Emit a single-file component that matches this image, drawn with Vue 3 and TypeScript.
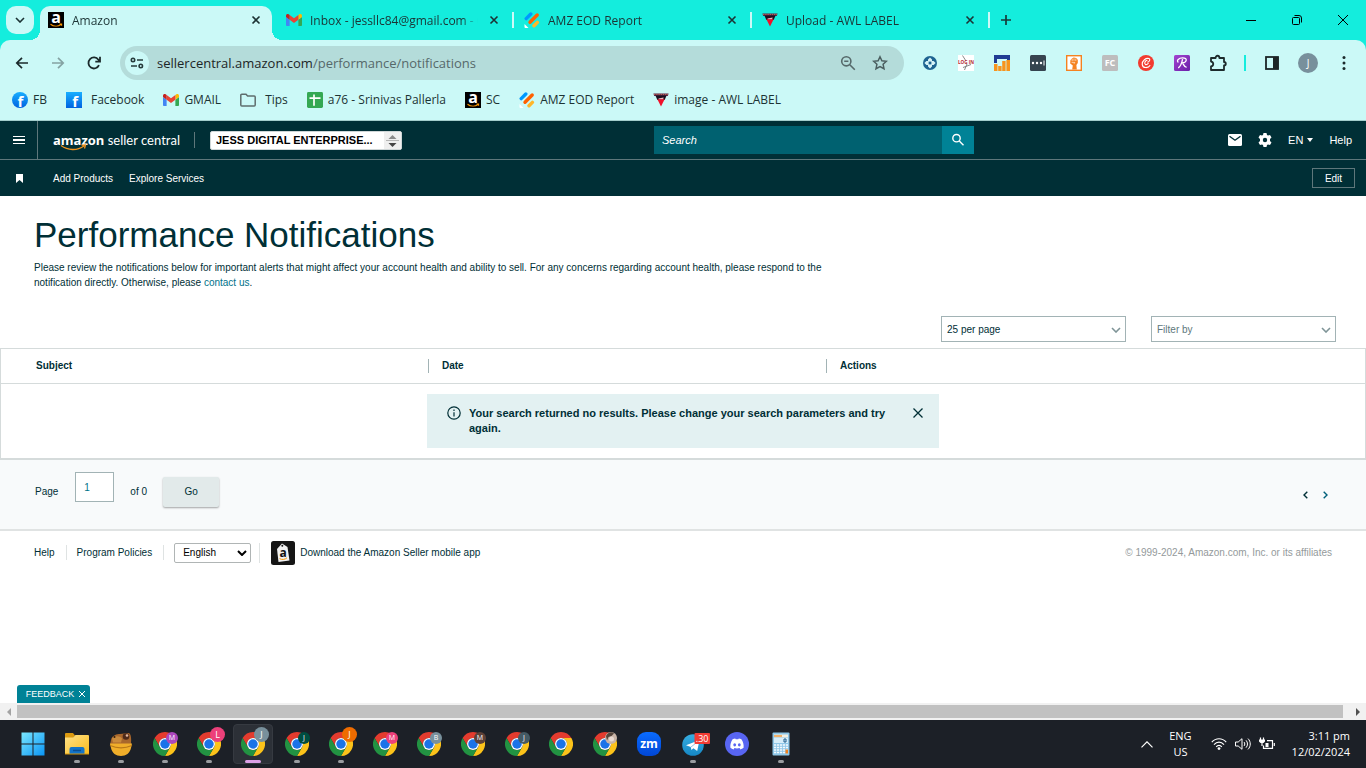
<script setup lang="ts">
import { h, ref } from 'vue'

interface Tab { title: string; icon: string; active?: boolean }
interface Bookmark { label: string; icon: string; wide?: boolean }
interface TaskItem { name: string; icon: string; badge?: string; color?: string; small?: boolean; running?: boolean; active?: boolean }
interface Glyph { text: string; x: number; y: number; size: number; fill?: string; weight?: number }

const tabs: Tab[] = [
  { title: 'Amazon', icon: 'amazon', active: true },
  { title: 'Inbox - jessllc84@gmail.com - Gmail', icon: 'gmail' },
  { title: 'AMZ EOD Report', icon: 'jot' },
  { title: 'Upload - AWL LABEL', icon: 'awl' },
]

const bookmarks: Bookmark[] = [
  { label: 'FB', icon: 'fb' },
  { label: 'Facebook', icon: 'fbsq', wide: true },
  { label: 'GMAIL', icon: 'gmail' },
  { label: 'Tips', icon: 'folder', wide: true },
  { label: 'a76 - Srinivas Pallerla', icon: 'sheet' },
  { label: 'SC', icon: 'amazon' },
  { label: 'AMZ EOD Report', icon: 'jot' },
  { label: 'image - AWL LABEL', icon: 'awl' },
]

const extensions: string[] = ['ext-plus', 'ext-login', 'ext-chart', 'ext-dots', 'ext-fist', 'ext-fc', 'ext-c', 'ext-r', 'puzzle']

const tasks: TaskItem[] = [
  { name: 'Start', icon: 'windows' },
  { name: 'File Explorer', icon: 'explorer', running: true },
  { name: 'Capybara', icon: 'capy', running: true },
  { name: 'Chrome M', icon: 'chrome', badge: 'M', color: '#ab47bc', small: true, running: true },
  { name: 'Chrome L', icon: 'chrome', badge: 'L', color: '#ec407a', running: true },
  { name: 'Chrome J', icon: 'chrome', badge: 'J', color: '#78909c', active: true },
  { name: 'Chrome J green', icon: 'chrome', badge: 'J', color: '#004d40', small: true, running: true },
  { name: 'Chrome J orange', icon: 'chrome', badge: 'J', color: '#ef6c00', running: true },
  { name: 'Chrome M pink', icon: 'chrome', badge: 'M', color: '#ec407a', small: true },
  { name: 'Chrome B', icon: 'chrome', badge: 'B', color: '#78909c', small: true },
  { name: 'Chrome M brown', icon: 'chrome', badge: 'M', color: '#5d4037', small: true },
  { name: 'Chrome J slate', icon: 'chrome', badge: 'J', color: '#455a64', small: true },
  { name: 'Chrome', icon: 'chrome' },
  { name: 'Chrome photo', icon: 'chromephoto' },
  { name: 'Zoom', icon: 'zoom' },
  { name: 'Telegram', icon: 'telegram', running: true },
  { name: 'Discord', icon: 'discord' },
  { name: 'Calculator', icon: 'calc', running: true },
]

const boxes: Record<string, string> = { zoom: '0 0 24 24', telegram: '0 0 28 24' }

const glyphs: Record<string, Glyph> = {
  amazon: { text: 'a', x: 8, y: 10.6, size: 16 },
  fb: { text: 'f', x: 8.4, y: 14.6, size: 15 },
  fbsq: { text: 'f', x: 9.2, y: 15, size: 15 },
  'ext-login': { text: 'LOG IN', x: 8, y: 8.8, size: 4.6, fill: '#b3282d' },
  'ext-fc': { text: 'FC', x: 8, y: 11.4, size: 9 },
  zoom: { text: 'zm', x: 12, y: 16, size: 12 },
  telegram: { text: '.30', x: 20.2, y: 10, size: 9, weight: 400 },
}

const Icon = (props: { name: string }) => {
  const g = glyphs[props.name]
  return h('svg', { viewBox: boxes[props.name] ?? '0 0 16 16', 'aria-hidden': 'true' }, [
    h('use', { href: '#' + props.name, width: '100%', height: '100%' }),
    g && h('text', {
      x: g.x, y: g.y, 'text-anchor': 'middle', 'font-family': 'Open Sans, sans-serif',
      'font-weight': g.weight ?? 700, 'font-size': g.size, fill: g.fill ?? '#fff',
    }, g.text),
  ])
}
Icon.props = ['name']

const page = ref('1')
</script>

<template>
  <div class="screen">
    <svg class="defs" aria-hidden="true">
      <defs>
        <linearGradient id="gFb" x1="0" y1="0" x2="0" y2="1"><stop offset="0" stop-color="#19afff" /><stop offset="1" stop-color="#0062e0" /></linearGradient>
        <linearGradient id="gWin" x1="0" y1="0" x2="1" y2="1"><stop offset="0" stop-color="#7be8ff" /><stop offset="1" stop-color="#0a95f5" /></linearGradient>
        <linearGradient id="gFold" x1="0" y1="0" x2="1" y2="1"><stop offset="0" stop-color="#ffe28a" /><stop offset="1" stop-color="#fbbc1c" /></linearGradient>
        <linearGradient id="gZoom" x1="0" y1="0" x2="0" y2="1"><stop offset="0" stop-color="#0a6cff" /><stop offset="1" stop-color="#0046d5" /></linearGradient>
        <linearGradient id="gTel" x1="0" y1="0" x2="0" y2="1"><stop offset="0" stop-color="#37aee2" /><stop offset="1" stop-color="#1587c4" /></linearGradient>
        <linearGradient id="gPur" x1="0" y1="0" x2="1" y2="1"><stop offset="0" stop-color="#a244d0" /><stop offset="1" stop-color="#6a1fa8" /></linearGradient>
      </defs>
      <symbol id="amazon" viewBox="0 0 16 16">
        <rect width="16" height="16" fill="#000" />
        <path d="M2.5 12.2c3.2 2.4 7.6 2.4 10.6.3M11.6 12h2v1.8" fill="none" stroke="#f90" stroke-width="1.1" />
      </symbol>
      <symbol id="gmail" viewBox="52 31 88 88">
        <path fill="#4285f4" d="M58 108h14V74L52 59v43c0 3.32 2.69 6 6 6" />
        <path fill="#34a853" d="M120 108h14c3.32 0 6-2.69 6-6V59l-20 15" />
        <path fill="#fbbc04" d="M120 48v26l20-15v-8c0-7.42-8.47-11.65-14.4-7.2" />
        <path fill="#ea4335" d="M72 74V48l24 18 24-18v26L96 92" />
        <path fill="#c5221f" d="M52 51v8l20 15V48l-5.6-4.2c-5.94-4.45-14.4-.22-14.4 7.2" />
      </symbol>
      <symbol id="jot" viewBox="0 0 16 16">
        <g fill="none" stroke-linecap="round" stroke-width="3.4">
          <path d="M2.200 6.600 6.800 2" stroke="#0099ff" />
          <path d="M6 10.200 13.200 3" stroke="#ff6100" />
          <path d="M10 13.800 13.400 10.400" stroke="#ffb629" />
        </g>
        <path d="M.5 12v3a1 1 0 0 0 1 1h3z" fill="#fff" />
      </symbol>
      <symbol id="awl" viewBox="0 0 16 16">
        <path d="M.4 1.600h15.200l-.8 2.400H1.200z" fill="#5b2348" />
        <path d="M2.400 3.600h11.200L11.600 8H4.400z" fill="#1b1020" />
        <path d="M1 2.400h14" stroke="#e58a5b" stroke-width=".7" stroke-dasharray="1.4 .8" />
        <path d="M4.400 7.200h7.200L8 14.400z" fill="#f0102a" />
        <path d="M5.400 6.400 10.600 5.600l-.4 1.600H5.800z" fill="#f7b5bb" />
      </symbol>
      <symbol id="fb" viewBox="0 0 16 16"><circle cx="8" cy="8" r="8" fill="url(#gFb)" /></symbol>
      <symbol id="fbsq" viewBox="0 0 16 16"><rect width="16" height="16" fill="url(#gFb)" /></symbol>
      <symbol id="folder" viewBox="0 0 16 16">
        <path d="M.800 3.200a1 1 0 0 1 1-1h4.200l1.600 1.800h6.600a1 1 0 0 1 1 1v8a1 1 0 0 1-1 1H1.800a1 1 0 0 1-1-1z" fill="none" stroke="#5f6d6d" stroke-width="1.500" />
      </symbol>
      <symbol id="sheet" viewBox="0 0 16 16">
        <rect width="16" height="16" rx="1.400" fill="#34a853" />
        <path d="M2.500 6.200h11M7 2.400v11.400" stroke="#fff" stroke-width="1.700" />
      </symbol>

      <symbol id="ext-plus" viewBox="0 0 16 16">
        <circle cx="8" cy="8" r="7" fill="#1e6391" />
        <path d="M8 2.400l2 2v1.600h1.600l2 2-2 2H10v1.600l-2 2-2-2V10H4.400l-2-2 2-2H6V4.400z" fill="#d7f3f7" />
        <path d="M6.600 6.600h2.800v2.800H6.600z" fill="#1e6391" />
      </symbol>
      <symbol id="ext-login" viewBox="0 0 16 16">
        <rect width="16" height="16" fill="#fff" />
        <path d="M4.500.500 8 6M9 9l-2.500 6M5 12.500 13 9.500" fill="none" stroke="#888" stroke-width="1" />
      </symbol>
      <symbol id="ext-chart" viewBox="0 0 16 16">
        <path d="M0 0h16v7h-3V4H3v4H0z" fill="#1f3c93" />
        <path d="M0 9h3.500v7H0zM4.200 11h3.400v5H4.200zM8.200 6h3.400v10H8.200zM12.400 5H16v11h-3.600z" fill="#f7941d" />
      </symbol>
      <symbol id="ext-dots" viewBox="0 0 16 16">
        <rect width="16" height="16" rx="1.500" fill="#35444f" />
        <circle cx="3" cy="8" r="1.200" fill="#fff" /><circle cx="7" cy="8" r="1.200" fill="#fff" /><circle cx="11" cy="8" r="1.200" fill="#fff" />
        <path d="M14 5.500v5" stroke="#fff" />
      </symbol>
      <symbol id="ext-fist" viewBox="0 0 16 16">
        <rect x=".7" y=".7" width="14.600" height="14.600" fill="#fff" stroke="#f58220" stroke-width="1.400" />
        <path d="M4.400 5.200 6 3.400l1.600-.8 1.600.2 1.600.8 1 1.400v3L10.400 10l.4 4.600H6.200L6.800 10.400 4.200 8.600z" fill="#f58220" />
        <path d="M6.200 3.800v2.400M8 3.400v2.400M9.800 3.600v2.400M5.600 7.400h3.200l-.8 1.400" fill="none" stroke="#fff" stroke-width=".6" />
      </symbol>
      <symbol id="ext-fc" viewBox="0 0 16 16"><rect width="16" height="16" rx="1.500" fill="#bdbdbd" /></symbol>
      <symbol id="ext-c" viewBox="0 0 16 16">
        <circle cx="8" cy="8" r="8" fill="#f23b2f" />
        <path d="M12.200 10.200C10.400 13.400 4.600 13.600 4.200 9.400 4 5.600 8 2.600 11 3.600c1.600.8.6 3.400-1.600 3.600M9.400 5.200C7 5.400 6 8.400 7.400 9.400c1.200.6 2.600-.4 3-1.600" fill="none" stroke="#fff" stroke-width="1.100" />
      </symbol>
      <symbol id="ext-r" viewBox="0 0 16 16">
        <rect width="16" height="16" rx="1.500" fill="url(#gPur)" />
        <path d="M4.400 7.400C2 5.800 4.800 2.800 8.600 2.800c5.400 0 4.400 4.800-.4 5.200M8.600 4.200C7.800 8 7 11.600 4.200 12.800M8.200 8c1.400 0 1.600 4.600 4.400 4" fill="none" stroke="#fff" stroke-width="1.300" />
      </symbol>
      <symbol id="puzzle" viewBox="0 0 18 18">
        <path d="M2 4h4.600c0-3 3.800-3 3.800 0H15v4c2.400 0 2.400 3.400 0 3.400V16H2v-3.600c3-.4 3-4.400 0-4.800z" fill="none" stroke="#1d2b2c" stroke-width="1.800" stroke-linejoin="round" />
      </symbol>

      <symbol id="chrome" viewBox="0 0 48 48">
        <path d="M3.215 12A24 24 0 0 1 44.785 12H24A12 12 0 0 0 13.607 30z" fill="#e33b2e" />
        <path d="M44.785 12A24 24 0 0 1 24 48L34.390 30A12 12 0 0 0 24 12z" fill="#fcc31a" />
        <path d="M24 48A24 24 0 0 1 3.215 12L13.607 30A12 12 0 0 0 34.390 30z" fill="#229342" />
        <circle cx="24" cy="24" r="12" fill="#fff" /><circle cx="24" cy="24" r="9.500" fill="#1a73e8" />
      </symbol>
      <symbol id="chromephoto" viewBox="0 0 48 48">
        <use href="#chrome" width="48" height="48" />
        <circle cx="36" cy="12" r="12" fill="#c9b5a8" />
        <path d="M26 8c4-8 12-9 16-5l-5 5-6 2-3 7z" fill="#54453c" />
        <circle cx="37" cy="14" r="5" fill="#e8dad2" />
      </symbol>
      <symbol id="windows" viewBox="0 0 24 24">
        <path d="M.5.500h11v11H.5zM12.500.500h11v11h-11zM.5 12.500h11v11H.5zM12.500 12.500h11v11h-11z" fill="url(#gWin)" />
      </symbol>
      <symbol id="explorer" viewBox="0 0 24 24">
        <path d="M0 2a1 1 0 0 1 1-1h7l2 2.500L8 6H0z" fill="#dc9a10" />
        <path d="M0 5.500h8L10.500 3H23a1 1 0 0 1 1 1v18H0z" fill="url(#gFold)" />
        <path d="M4.500 22v-5a2 2 0 0 1 2-2h11a2 2 0 0 1 2 2v5z" fill="#1374c9" /><path d="M8 18.500h8" stroke="#0a4f93" stroke-width="1.500" /><path d="M0 21.500h24v1H0z" fill="#d7960c" />
      </symbol>
      <symbol id="capy" viewBox="0 0 24 24">
        <path d="M2 8c1-5 6-6 9-6l9-1c3 2 2 9 2 12H1z" fill="#a8672c" />
        <circle cx="17" cy="4.500" r="3.300" fill="#4d2a1a" /><circle cx="18" cy="3.500" r="1.300" fill="#e5b9a0" />
        <path d="M3 6.500c2-3 8-3 10 0l-1 4H4z" fill="#c98a3c" /><circle cx="5.500" cy="5" r="1" fill="#35200f" />
        <path d="M1 11.500h22l-1 4.500c-1 5-5 8-10 8s-9-3-10-8z" fill="#f0ae2a" /><path d="M1 13.500c7 3 15 3 22 0" stroke="#b87818" stroke-width="1.200" fill="none" />
      </symbol>
      <symbol id="zoom" viewBox="0 0 24 24"><rect width="24" height="24" rx="9" fill="url(#gZoom)" /></symbol>
      <symbol id="telegram" viewBox="0 0 28 24">
        <circle cx="11" cy="13" r="10.800" fill="url(#gTel)" />
        <path d="M4 13.200 17.500 8l-2.300 11-3.800-2.800-2 1.800-.6-3z" fill="#fff" /><path d="M8.800 15.200l6.200-5" stroke="#8fc6e6" />
        <rect x="12.500" y="1" width="15.500" height="11" rx="1" fill="#f23c34" />
      </symbol>
      <symbol id="discord" viewBox="0 0 24 24">
        <circle cx="12" cy="12" r="12" fill="#5865f2" />
        <path d="M7.600 7.200C8.600 6.700 9.500 6.500 10.200 6.400l.5.900c.9-.1 1.700-.1 2.600 0l.5-.9c.9.100 1.700.400 2.600.8 1.900 2.800 2.500 5.500 2.200 8.600-1 .9-2 1.300-3.200 1.600l-.8-1.300c-1.700.5-3.500.5-5.200 0l-.8 1.300c-1.200-.3-2.200-.8-3.200-1.600-.3-3.100.4-5.800 2.200-8.600z" fill="#fff" />
        <ellipse cx="9.700" cy="12.800" rx="1.400" ry="1.600" fill="#5865f2" /><ellipse cx="14.300" cy="12.800" rx="1.400" ry="1.600" fill="#5865f2" />
      </symbol>
      <symbol id="calc" viewBox="0 0 24 24">
        <rect x="3.500" y=".5" width="17" height="23" rx="1" fill="#8fc7e8" /><rect x="5" y="2.500" width="14" height="3" fill="#f4efe0" /><path d="M5 4h8" stroke="#f0902c" stroke-width="1.300" />
        <rect x="5" y="6" width="14" height="5" fill="#d7eefa" /><path d="M15 7h2v3h-2z" fill="none" stroke="#1d5c8d" />
        <path d="M5 13h14M5 15.500h14M5 18h14M5 20.500h14" stroke="#f3fafe" stroke-width="1.700" stroke-dasharray="2.200 .8" /><path d="M16.500 17.500h2.500v4h-2.500z" fill="#f0801c" />
      </symbol>
      <symbol id="close" viewBox="0 0 10 10"><path d="M1.500 1.500l7 7M8.500 1.500l-7 7" fill="none" stroke="currentColor" stroke-width="1.600" /></symbol>
      <symbol id="chevron" viewBox="0 0 10 6"><path d="M1 1l4 4 4-4" fill="none" stroke="currentColor" stroke-width="1.600" /></symbol>
    </svg>

    <header class="browser">
      <div class="tabstrip">
        <button class="tab-search" aria-label="Search tabs"><svg width="10" height="6"><use href="#chevron" /></svg></button>
        <div v-for="t in tabs" :key="t.title" class="tab" :class="{ active: t.active }">
          <div class="tab-body">
            <Icon class="fav" :name="t.icon" />
            <span class="tab-title">{{ t.title }}</span>
            <button class="tab-close" aria-label="Close tab"><svg width="10" height="10"><use href="#close" /></svg></button>
          </div>
          <i class="tab-sep"></i>
        </div>
        <button class="new-tab" aria-label="New tab"><svg width="12" height="12" viewBox="0 0 12 12"><path d="M6 1v10M1 6h10" stroke="#173b3a" stroke-width="1.700" /></svg></button>
        <div class="win-controls">
          <button aria-label="Minimize"><svg width="10" height="10"><path d="M0 5.500h10" stroke="#000" /></svg></button>
          <button aria-label="Restore"><svg width="10" height="10" viewBox="0 0 10 10" fill="none" stroke="#000"><rect x=".5" y="2.500" width="7" height="7" rx="1" /><path d="M2.500.500H7a2.500 2.500 0 0 1 2.500 2.500v4.500" /></svg></button>
          <button aria-label="Close"><svg width="10" height="10" viewBox="0 0 10 10"><path d="M0 0l10 10M10 0L0 10" stroke="#000" /></svg></button>
        </div>
      </div>

      <div class="toolbar">
        <button class="tool" aria-label="Back"><svg width="14" height="14" viewBox="0 0 14 14" fill="none" stroke="#1b2a2b" stroke-width="1.700"><path d="M13 7H2M7 1.800 1.800 7l5.200 5.200" /></svg></button>
        <button class="tool" aria-label="Forward"><svg width="14" height="14" viewBox="0 0 14 14" fill="none" stroke="#85a3a3" stroke-width="1.700"><path d="M1 7h11M7 1.800 12.200 7 7 12.200" /></svg></button>
        <button class="tool" aria-label="Reload"><svg width="14" height="14" viewBox="0 0 14 14" fill="none" stroke="#1b2a2b" stroke-width="1.800"><path d="M12 9.200A5.500 5.500 0 1 1 11.400 3.700L12.600 5M13 .8V5.600H8.300" /></svg></button>
        <div class="omnibox">
          <button class="site-info" aria-label="Site information"><svg width="14" height="12" viewBox="0 0 14 12" fill="none" stroke="#263b3b" stroke-width="1.600"><circle cx="3" cy="3" r="1.700" /><path d="M7 3h6M1 9h6" /><circle cx="10.800" cy="9" r="1.700" /></svg></button>
          <a class="url" href="#"><span>sellercentral.amazon.com</span>/performance/notifications</a>
          <button class="omni-btn" aria-label="Zoom"><svg width="16" height="16" viewBox="0 0 16 16" fill="none" stroke="#56696a" stroke-width="1.600"><circle cx="6.300" cy="6.300" r="4.600" /><path d="M9.800 9.800l5 5M4.200 6.300h4.200" /></svg></button>
          <button class="omni-btn" aria-label="Bookmark"><svg width="16" height="16" viewBox="0 0 16 16" fill="none" stroke="#4b5f60" stroke-width="1.500"><path d="M8 1.800l1.900 4 4.500.5-3.300 3 .9 4.400L8 11.500l-4 2.200.9-4.400-3.300-3 4.500-.5z" /></svg></button>
        </div>
        <button v-for="e in extensions" :key="e" class="tool" :aria-label="e"><Icon :class="e === 'puzzle' ? 'puz' : 'fav'" :name="e" /></button>
        <i class="tool-sep"></i>
        <button class="tool" aria-label="Side panel"><svg width="14" height="14" viewBox="0 0 14 14"><rect x="1" y="1" width="12" height="12" fill="none" stroke="#1c2526" stroke-width="1.800" /><path d="M8 1h5.500v12H8z" fill="#1c2526" /></svg></button>
        <button class="tool" aria-label="Profile"><span class="avatar">J</span></button>
        <button class="tool" aria-label="Menu"><svg width="4" height="16" fill="#1b2a2b"><circle cx="2" cy="2.500" r="1.500" /><circle cx="2" cy="8" r="1.500" /><circle cx="2" cy="13.500" r="1.500" /></svg></button>
      </div>

      <nav class="bookmarks">
        <a v-for="b in bookmarks" :key="b.label" href="#" :class="{ wide: b.wide }"><Icon class="fav" :name="b.icon" />{{ b.label }}</a>
      </nav>
    </header>

    <div class="seller">
      <div class="seller-top">
        <button class="burger" aria-label="Menu"><svg width="12" height="9" fill="#fff"><path d="M0 0h12v1H0zM0 3h12v2H0zM0 7h12v1H0z" /></svg></button>
        <a class="brand" href="#"><b>amazon</b> seller central
          <svg class="smile" width="28" height="7" viewBox="0 0 28 7"><path d="M1 1.500c7 5 16 5.500 23 .5M21.500 1.200l4-.3-1 3.600" fill="none" stroke="#f0931e" stroke-width="1.300" /></svg>
        </a>
        <i class="brand-sep"></i>
        <label class="account">
          <select aria-label="Account"><option>JESS DIGITAL ENTERPRISE...</option></select>
          <svg width="17" height="17" viewBox="0 0 17 17"><path d="M0 0h17v17H0z" fill="#efefef" /><path d="M4.500 7 8.500 3l4 4z" fill="#8a8a8a" /><path d="M2 8.500h13" stroke="#b5b5b5" /><path d="M4.500 11l4 4 4-4z" fill="#444" /></svg>
        </label>
        <form class="search" @submit.prevent>
          <input type="text" placeholder="Search" aria-label="Search" />
          <button aria-label="Submit search"><svg width="14" height="14" viewBox="0 0 14 14" fill="none" stroke="#fff" stroke-width="1.400"><circle cx="5.500" cy="5.200" r="3.700" /><path d="M8.300 8l4.200 4.300" /></svg></button>
        </form>
        <div class="top-actions">
          <button aria-label="Messages"><svg width="14" height="12" viewBox="0 0 14 12"><rect width="14" height="12" rx="1.500" fill="#fff" /><path d="M1.500 2.200 7 6.200l5.500-4" fill="none" stroke="#002f36" stroke-width="1.400" /></svg></button>
          <button aria-label="Settings"><svg width="14" height="14" viewBox="0 0 14 14"><path d="M5.500 0h3l.5 2 1 .6 2-.6L13.500 4.600 12 6v2l1.500 1.400L12 12l-2-.6-1 .6-.5 2h-3L5 12l-1-.6-2 .6L.5 9.400 2 8V6L.5 4.600 2 2l2 .6 1-.6z" fill="#fff" /><circle cx="7" cy="7" r="2.200" fill="#002f36" /></svg></button>
          <button class="lang">EN<svg width="6" height="4"><path d="M0 0h6L3 4z" fill="#fff" /></svg></button>
          <a href="#">Help</a>
        </div>
      </div>
      <nav class="seller-sub">
        <svg class="mark" width="7" height="9" viewBox="0 0 7 9"><path d="M0 0h7v9L3.500 6 0 9z" fill="#fff" /></svg>
        <a href="#">Add Products</a>
        <a href="#">Explore Services</a>
        <button class="edit">Edit</button>
      </nav>
    </div>

    <main class="page">
      <section class="intro">
        <h1>Performance Notifications</h1>
        <p>Please review the notifications below for important alerts that might affect your account health and ability to sell. For any concerns regarding account health, please respond to the notification directly. Otherwise, please <a href="#">contact us</a>.</p>
      </section>

      <div class="filters">
        <label class="pick"><select aria-label="Rows per page"><option>25 per page</option></select><svg width="10" height="6"><use href="#chevron" /></svg></label>
        <label class="pick muted"><select aria-label="Filter by"><option>Filter by</option></select><svg width="10" height="6"><use href="#chevron" /></svg></label>
      </div>

      <table class="grid">
        <thead>
          <tr><th class="c1"><span>Subject</span></th><th class="c2"><span>Date</span></th><th><span>Actions</span></th></tr>
        </thead>
        <tbody>
          <tr><td colspan="3">
            <div class="alert" role="status">
              <svg class="info" width="14" height="14" viewBox="0 0 14 14" fill="none" stroke="#002f36" stroke-width="1.200"><circle cx="7" cy="7" r="6.200" /><path d="M7 6.200V10.400M7 3.600V5" /></svg>
              <p>Your search returned no results. Please change your search parameters and try again.</p>
              <button aria-label="Dismiss"><svg width="10" height="10" viewBox="0 0 10 10"><path d="M.5.500l9 9M9.500.500l-9 9" stroke="#002f36" stroke-width="1.300" /></svg></button>
            </div>
          </td></tr>
        </tbody>
      </table>

      <div class="pager">
        <label for="page-no">Page</label>
        <input id="page-no" v-model="page" type="text" />
        <span class="of">of 0</span>
        <button class="go">Go</button>
        <div class="arrows">
          <button aria-label="Previous page"><svg width="5" height="8" viewBox="0 0 5 8"><path d="M4.300.700 1 4l3.300 3.300" fill="none" stroke="#002f36" stroke-width="1.400" /></svg></button>
          <button aria-label="Next page"><svg width="5" height="8" viewBox="0 0 5 8"><path d="M.7.700 4 4 .7 7.300" fill="none" stroke="#00607a" stroke-width="1.400" /></svg></button>
        </div>
      </div>

      <footer class="foot">
        <a href="#">Help</a><i></i>
        <a href="#">Program Policies</a><i></i>
        <label class="lang-pick"><select aria-label="Language"><option>English</option></select><svg width="10" height="6" viewBox="0 0 10 6"><path d="M1 1l4 4 4-4" fill="none" stroke="#000" stroke-width="2" /></svg></label><i class="tall"></i>
        <a class="app" href="#">
          <svg width="24" height="24" viewBox="0 0 24 24"><rect width="24" height="24" rx="2.500" fill="#151515" /><path d="M6 8l5-5.500L16.500 6 18.500 19.500 7.500 21z" fill="#f2f2f2" /><circle cx="11.300" cy="4.800" r="1" fill="#151515" /><text x="12" y="16" text-anchor="middle" font-family="Open Sans, sans-serif" font-weight="700" font-size="12" fill="#111">a</text><path d="M8.500 17.600c2.500 1.400 5.500 1 7.500-.8" fill="none" stroke="#f90" /></svg>
          Download the Amazon Seller mobile app</a>
        <span class="copy">© 1999-2024, Amazon.com, Inc. or its affiliates</span>
      </footer>

      <button class="feedback">FEEDBACK<svg width="8" height="8" viewBox="0 0 8 8"><path d="M1 1l6 6M7 1 1 7" stroke="#fff" /></svg></button>
    </main>

    <div class="hscroll">
      <button aria-label="Scroll left"><svg width="4" height="8"><path d="M4 0v8L0 4z" fill="#a3a3a3" /></svg></button>
      <div class="thumb"></div>
      <button class="end" aria-label="Scroll right"><svg width="4" height="8"><path d="M0 0v8l4-4z" fill="#505050" /></svg></button>
    </div>

    <footer class="taskbar">
      <button v-for="t in tasks" :key="t.name" class="task" :class="{ active: t.active, running: t.running }" :aria-label="t.name">
        <Icon class="task-icon" :class="{ tele: t.icon === 'telegram' }" :name="t.icon" />
        <span v-if="t.badge" class="badge" :class="{ small: t.small }" :style="{ background: t.color }">{{ t.badge }}</span>
      </button>
      <div class="tray">
        <button class="up" aria-label="Hidden icons"><svg width="12" height="7" viewBox="0 0 12 7"><path d="M.5 6.300 6 .8l5.500 5.500" fill="none" stroke="#fff" stroke-width="1.200" /></svg></button>
        <div class="ime">ENG<br />US</div>
        <div class="status">
          <svg width="16" height="14" viewBox="0 0 16 14" fill="none" stroke="#fff" stroke-width="1.200"><path d="M.8 5.200c4-4.600 10.400-4.600 14.400 0M3 7.600c3-3.400 7-3.400 10 0M5.200 9.800c1.600-1.900 4-1.900 5.600 0" /><circle cx="8" cy="11.600" r="1.400" fill="#fff" stroke="none" /></svg>
          <svg width="16" height="14" viewBox="0 0 16 14" fill="none" stroke="#fff"><path d="M.5 5v4h2.700L7 12.300V1.700L3.200 5H.5M9 5c1 1 1 3 0 4M11 3.300c2 2 2 5.400 0 7.400M13 1.600c3 3 3 7.800 0 10.800" /></svg>
          <svg width="16" height="14" viewBox="0 0 16 14" fill="none" stroke="#fff" stroke-width="1.200"><path d="M8 3.600h5.500V11.400H4.500V8.500M15.300 6v3M1.500.500v2.500M4.500.500v2.500M3 5.500v3.500" /><path d="M0 2.500h6v2L4.500 6h-3L0 4.500zM6.500 6h3v4h-3z" fill="#fff" stroke="none" /></svg>
        </div>
        <div class="clock">3:11 pm<br />12/02/2024</div>
      </div>
    </footer>
  </div>
</template>

<style>
html, body { margin: 0; }
</style>

<style scoped>
* { box-sizing: border-box; }
button, input, select { font: inherit; color: inherit; margin: 0; border-radius: 0; }
button { border: 0; background: none; padding: 0; display: flex; align-items: center; justify-content: center; }
a { color: inherit; text-decoration: none; }
svg { display: block; flex: none; }
i { flex: none; }
.defs { position: absolute; width: 0; height: 0; }
.fav { width: 16px; height: 16px; }
.puz { width: 18px; height: 18px; }

.screen { min-height: 100vh; display: flex; flex-direction: column; background: #fff; font-family: "Liberation Sans", Arial, sans-serif; color: #002f36; font-size: 10px; }

.browser { background: #14eddd; font-family: "Open Sans", "Noto Sans", sans-serif; font-size: 12px; color: #1c3334; }
.tabstrip { display: flex; height: 40px; align-items: flex-start; padding-left: 6px; }
.tab-search { width: 28px; height: 28px; margin: 6px 6px 0 0; border-radius: 10px; background: #cbf9f7; }
.tab { width: 238px; flex: 0 1 238px; min-width: 0; height: 40px; display: flex; padding-top: 6px; }
.tab-body { position: relative; flex: 1; min-width: 0; display: flex; align-items: center; height: 34px; padding: 0 8px 6px; border-radius: 10px 10px 0 0; }
.active .tab-body { background: #cbf9f7; }
.active .tab-body::before, .active .tab-body::after { content: ""; position: absolute; bottom: 0; width: 10px; height: 10px; }
.active .tab-body::before { left: -10px; background: radial-gradient(circle at 0 0, transparent 10px, #cbf9f7 10px); }
.active .tab-body::after { right: -10px; background: radial-gradient(circle at 100% 0, transparent 10px, #cbf9f7 10px); }
.tab-title { flex: 1; min-width: 0; margin: 0 8px; overflow: hidden; white-space: nowrap; mask-image: linear-gradient(to right, #000 calc(100% - 16px), transparent); }
.tab-close { width: 16px; height: 16px; color: #1c3334; }
.tab-sep { width: 2px; height: 16px; margin: 6px 2px 0; background: #cbf9f7; }
.active .tab-sep { background: none; }
.new-tab { width: 24px; height: 28px; margin: 6px 0 0 2px; }
.win-controls { margin-left: auto; display: flex; }
.win-controls button { width: 46px; height: 40px; }

.toolbar { display: flex; align-items: center; height: 46px; padding: 0 4px; background: #cbf9f7; border-radius: 10px 10px 0 0; }
.tool { width: 36px; height: 36px; flex: none; }
.omnibox { flex: 1; display: flex; align-items: center; height: 34px; margin: 0 8px; padding: 0 8px 0 5px; border-radius: 17px; background: #b4dcda; }
.site-info { width: 24px; height: 24px; border-radius: 12px; background: #cbf9f7; }
.url { flex: 1; margin-left: 8px; font-size: 13px; color: #56696a; }
.url span { color: #1c2526; }
.omni-btn { width: 32px; height: 32px; }
.tool-sep { width: 2px; height: 16px; margin: 0 8px; background: #14eddd; }
.avatar { width: 20px; height: 20px; line-height: 20px; border-radius: 10px; background: #78909c; color: #fff; font-size: 10px; text-align: center; }
.bookmarks { display: flex; align-items: center; gap: 19px; height: 35px; padding: 0 12px 7px; background: #cbf9f7; border-bottom: 1px solid #a3cdcc; }
.bookmarks a { display: flex; align-items: center; gap: 5px; white-space: nowrap; }
.bookmarks a.wide { gap: 9px; }

.seller { background: #002f36; color: #fff; }
.seller-top { display: flex; align-items: center; height: 39px; border-bottom: 1px solid #5e777b; }
.burger { width: 38px; height: 38px; border-right: 1px solid #5e777b; }
.brand { position: relative; flex: none; width: 127px; margin-left: 15px; font-family: Lato, "Open Sans", sans-serif; font-size: 13px; line-height: 18px; white-space: nowrap; }
.brand b { font-family: "Open Sans", sans-serif; font-size: 13px; }
.smile { position: absolute; left: 7px; bottom: -2px; }
.brand-sep { width: 1px; height: 16px; margin: 0 15px 0 14px; background: #5e777b; }
.account { position: relative; width: 192px; font-size: 11px; font-weight: 700; color: #000; }
.account select { display: block; width: 100%; height: 19px; padding: 0 18px 0 5px; appearance: none; background: #fff; border: 1px solid #cfd6d7; border-radius: 2px; }
.account svg { position: absolute; right: 1px; top: 1px; pointer-events: none; }
.search { display: flex; width: 320px; height: 28px; margin-left: 252px; font-size: 11px; }
.search input { flex: 1; min-width: 0; border: 0; padding: 0 8px; background: #006170; outline: 0; }
.search input::placeholder { color: #fff; font-style: italic; opacity: 1; }
.search button { width: 32px; background: #008296; }
.top-actions { margin-left: auto; display: flex; align-items: center; gap: 16px; padding-right: 14px; font-size: 11px; }
.lang { gap: 4px; }
.seller-sub { display: flex; align-items: center; height: 36px; padding: 0 11px 0 16px; font-size: 10px; }
.mark { margin-right: 30px; }
.seller-sub a { margin-right: 16px; }
.edit { width: 43px; height: 20px; margin-left: auto; border: 1px solid #5e777b; }

.page { flex: 1; display: flex; flex-direction: column; }
.intro { padding: 19px 34px 0; }
h1 { margin: 0; font-size: 35px; line-height: 40px; font-weight: 400; }
p { margin: 0; }
.intro p { max-width: 828px; margin-top: 5px; font-size: 10px; line-height: 15px; }
.intro a { color: #00728a; }
.filters { display: flex; justify-content: flex-end; gap: 25px; padding: 26px 30px 6px; }
.pick { position: relative; width: 185px; color: #002f36; }
.pick.muted { color: #5e777b; }
.pick select { display: block; width: 100%; height: 26px; padding: 0 5px; appearance: none; background: #fff; border: 1px solid #a2b3b5; }
.pick svg { position: absolute; right: 5px; top: 11px; color: #7f9497; pointer-events: none; }

.grid { width: 100%; border-collapse: separate; border-spacing: 0; border: 1px solid #d5dbdb; table-layout: fixed; }
.grid th { height: 35px; padding: 0; text-align: left; font-size: 10px; border-bottom: 1px solid #d5dbdb; }
.grid .c1 { width: 427px; padding-left: 34px; }
.grid .c2 { width: 398px; }
.grid th span { display: block; line-height: 14px; padding-left: 13px; border-left: 1px solid #a2b3b5; }
.grid .c1 span { padding-left: 1px; border-left: 0; }
.grid td { padding: 10px; }
.alert { display: flex; align-items: flex-start; width: 512px; height: 54px; margin: 0 auto; padding: 12px 16px 0 20px; background: #e3f1f2; font-size: 11px; line-height: 15px; font-weight: 700; }
.alert p { flex: 1; margin: 0 12px 0 8px; }
.alert button { width: 10px; height: 14px; }

.pager { display: flex; align-items: center; height: 72px; padding: 0 38px 6px 35px; background: #f8fafb; border-top: 1px solid #d5dbdb; border-bottom: 2px solid #e0e3e3; }
.pager input { align-self: flex-start; width: 39px; height: 30px; margin: 12px 16px 0 17px; padding: 0 8px; border: 1px solid #a2b3b5; background: #fff; color: #00728a; }
.go { width: 56px; height: 30px; margin-left: 16px; background: #e2eaea; border-radius: 2px; box-shadow: 0 1px 2px rgba(0, 0, 0, .35); }
.arrows { margin: 6px 0 0 auto; display: flex; gap: 15px; }

.foot { display: flex; align-items: center; height: 43px; padding: 0 34px; }
.foot i { width: 1px; height: 15px; margin: 0 10px 0 11px; background: #dfe3e3; }
.lang-pick { position: relative; width: 77px; color: #000; }
.lang-pick select { display: block; width: 100%; height: 20px; padding: 0 8px; appearance: none; background: #fff; border: 1px solid #b0b5b5; border-radius: 2px; }
.lang-pick svg { position: absolute; right: 4px; top: 7px; pointer-events: none; }
.foot i.tall { height: 20px; margin: 0 11px 0 8px; }
.app { display: flex; align-items: center; gap: 5px; }
.copy { margin-left: auto; color: #949a9b; }
.feedback { width: 73px; height: 18px; margin: auto 0 0 17px; padding-left: 5px; gap: 4px; background: #008296; color: #fff; font-size: 9px; border-radius: 3px 3px 0 0; }

.hscroll { display: flex; align-items: center; height: 17px; background: #f1f1f1; }
.hscroll button { width: 17px; height: 17px; }
.hscroll .end { margin-left: 6px; }
.thumb { flex: 1; height: 13px; background: #c1c1c1; }

.taskbar { display: flex; align-items: center; height: 48px; padding: 0 16px 0 11px; background: #1c2027; color: #fff; font-family: "Open Sans", "Noto Sans", sans-serif; font-size: 11px; line-height: 16px; }
.task { position: relative; width: 44px; height: 48px; flex: none; z-index: 0; }
.task.active::before { content: ""; position: absolute; inset: 4px 2px; z-index: -1; border-radius: 4px; background: #2c3037; border: 1px solid #363a41; }
.task.running::after, .task.active::after { content: ""; position: absolute; left: 19px; bottom: 5px; width: 6px; height: 3px; border-radius: 2px; background: #9a9ca0; }
.task.active::after { left: 14px; width: 16px; background: #dca0e6; }
.task-icon { width: 24px; height: 24px; }
.tele { width: 28px; margin-left: 6px; }
.badge { position: absolute; left: 23px; top: 7px; width: 15px; height: 15px; border-radius: 8px; font-size: 9px; line-height: 15px; text-align: center; }
.badge.small { top: 12px; width: 12px; height: 12px; font-size: 7px; line-height: 12px; }
.tray { margin-left: auto; display: flex; align-items: center; text-align: center; }
.ime { margin: 0 19px 0 16px; }
.status { display: flex; gap: 8px; margin-right: 17px; }
.clock { text-align: right; }
</style>
